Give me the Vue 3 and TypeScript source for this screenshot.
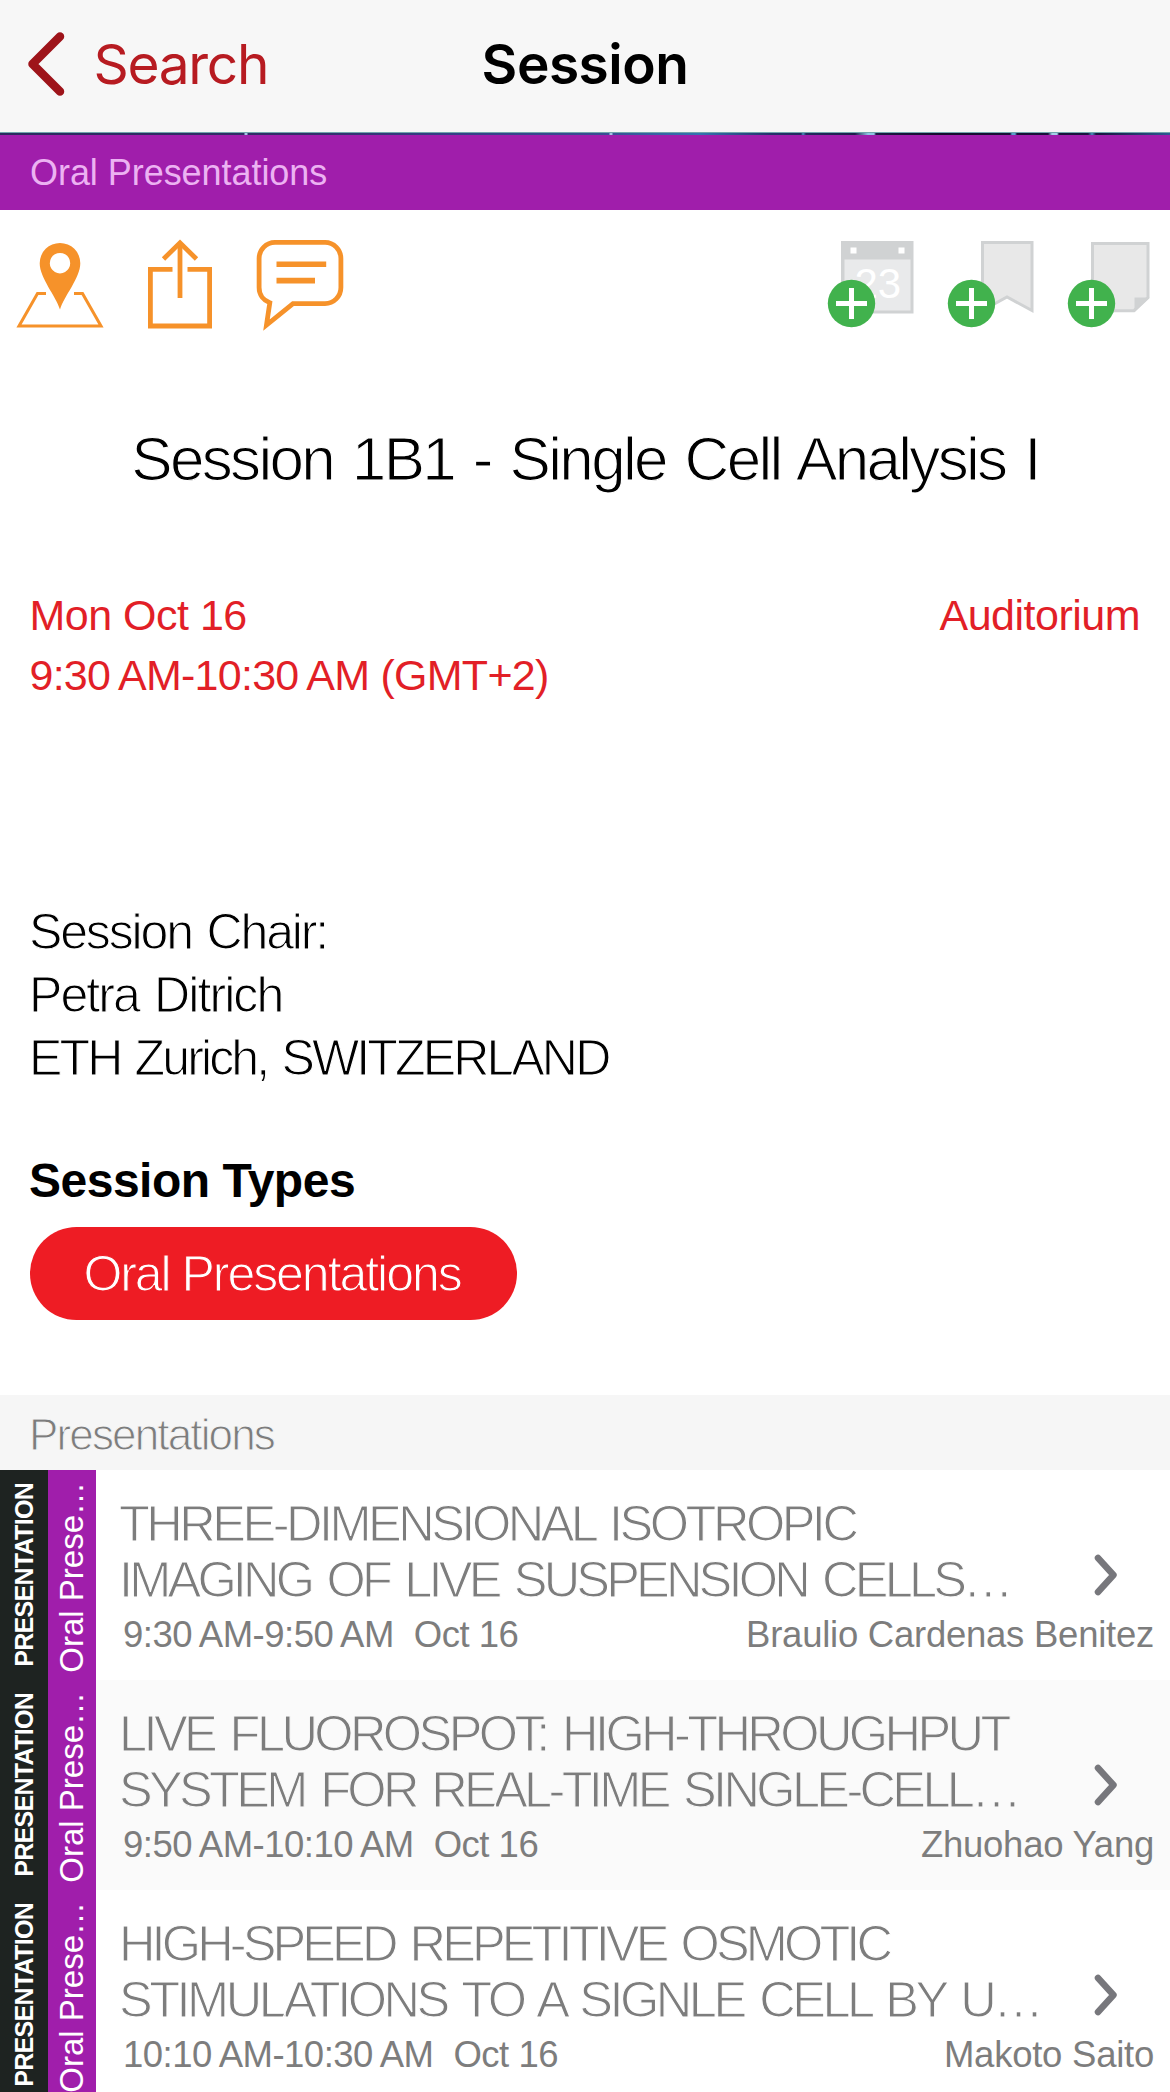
<script setup lang="ts">
interface Line {
  text: string
  /** Letter spacing in pixels. */
  tracking: number
}

interface Presentation {
  lines: Line[]
  time: string
  date: string
  speaker: string
}

const presentations: Presentation[] = [
  {
    lines: [
      { text: 'THREE-DIMENSIONAL ISOTROPIC', tracking: -3.5 },
      { text: 'IMAGING OF LIVE SUSPENSION CELLS…', tracking: -3.8 },
    ],
    time: '9:30\u2009AM-9:50\u2009AM',
    date: 'Oct 16',
    speaker: 'Braulio Cardenas Benitez',
  },
  {
    lines: [
      { text: 'LIVE FLUOROSPOT: HIGH-THROUGHPUT', tracking: -3.58 },
      { text: 'SYSTEM FOR REAL-TIME SINGLE-CELL…', tracking: -3.65 },
    ],
    time: '9:50\u2009AM-10:10\u2009AM',
    date: 'Oct 16',
    speaker: 'Zhuohao Yang',
  },
  {
    lines: [
      { text: 'HIGH-SPEED REPETITIVE OSMOTIC', tracking: -3.88 },
      { text: 'STIMULATIONS TO A SIGNLE CELL BY U…', tracking: -3.48 },
    ],
    time: '10:10\u2009AM-10:30\u2009AM',
    date: 'Oct 16',
    speaker: 'Makoto Saito',
  },
]

const chair: Line[] = [
  { text: 'Session Chair:', tracking: -2.15 },
  { text: 'Petra Ditrich', tracking: -1.9 },
  { text: 'ETH Zurich, SWITZERLAND', tracking: -2.85 },
]
</script>

<template>
  <div class="screen">
    <header class="nav">
      <button class="back">
        <svg class="back-icon" width="44" height="72" viewBox="0 0 44 72">
          <path d="M33 8.500 L5.500 36 L33 63.500" />
        </svg>
        <span class="back-label">Search</span>
      </button>
      <h1 class="nav-title">Session</h1>
    </header>
    <div class="photo-strip"></div>
    <div class="category">Oral Presentations</div>

    <div class="toolbar">
      <div class="tools">
        <svg width="120" height="140" viewBox="0 0 120 140">
          <path
            fill="#f6922a"
            fill-rule="evenodd"
            d="M60 99.500 C56 86 39.700 68 39.700 53.200 A20.300 20.300 0 0 1 80.300 53.200 C80.300 68 64 86 60 99.500 Z M60 43 a10.200 10.200 0 1 0 0.010 0 Z"
          />
          <path fill="none" stroke="#f6922a" stroke-width="3" d="M46 83.500 H37.500 L19 116 H101 L82.500 83.500 H74" />
        </svg>
        <svg width="120" height="140" viewBox="0 0 120 140">
          <g fill="none" stroke="#f6922a" stroke-width="4.800">
            <path d="M52.500 59.400 H30.400 V116 H89.600 V59.400 H67.500" />
            <path d="M60 88 V33" />
            <path d="M43.500 49 L60 32.800 L76.500 49" />
          </g>
        </svg>
        <svg width="120" height="140" viewBox="0 0 120 140">
          <g fill="none" stroke="#f6922a" stroke-width="4.800" stroke-miterlimit="10">
            <path d="M35 32.400 H85 A16 16 0 0 1 100.900 48.400 V77.600 A16 16 0 0 1 85 93.600 H53 L26.500 115 L29.800 92.800 C23.500 90.500 19.100 85 19.100 77.600 V48.400 A16 16 0 0 1 35 32.400 Z" />
            <path d="M36.500 54.200 H86.200" stroke-width="5.600" />
            <path d="M36.500 70.600 H75" stroke-width="5.600" />
          </g>
        </svg>
      </div>
      <div class="tools">
        <svg width="120" height="140" viewBox="0.500 0 120 140">
          <rect x="31.500" y="31" width="72.500" height="72.500" fill="#d0d2d3" />
          <rect x="35" y="49.500" width="66" height="51" fill="#e9eaeb" />
          <rect x="41" y="37.500" width="6" height="6" fill="#fff" />
          <rect x="89" y="37.500" width="6" height="6" fill="#fff" />
          <text class="day" x="45" y="88">23</text>
          <circle cx="42" cy="93.500" r="23.700" fill="#41b24d" />
          <path d="M26.500 93.500 H57.500 M42 78 V109" stroke="#fff" stroke-width="5" />
        </svg>
        <svg width="120" height="140" viewBox="0.500 0 120 140">
          <path d="M53 32.500 H102.500 V100.500 L77.500 87 L53 100.500 Z" fill="#e8e8e8" stroke="#d0d2d3" stroke-width="3" />
          <circle cx="42" cy="93.500" r="23.700" fill="#41b24d" />
          <path d="M26.500 93.500 H57.500 M42 78 V109" stroke="#fff" stroke-width="5" />
        </svg>
        <svg width="120" height="140" viewBox="0.500 0 120 140">
          <path d="M43 33.500 H98.500 V87.500 L84.500 100.700 H43 Z" fill="#e8e8e8" stroke="#d0d2d3" stroke-width="3" />
          <path d="M85 87.500 H100 L85 102 Z" fill="#d0d2d3" />
          <circle cx="42" cy="93.500" r="23.700" fill="#41b24d" />
          <path d="M26.500 93.500 H57.500 M42 78 V109" stroke="#fff" stroke-width="5" />
        </svg>
      </div>
    </div>

    <h2 class="session-title">Session 1B1 - Single Cell Analysis I</h2>

    <div class="when">
      <div>
        <div>Mon Oct 16</div>
        <div class="hours">9:30&#8201;AM-10:30&#8201;AM (GMT+2)</div>
      </div>
      <div>Auditorium</div>
    </div>

    <div class="chair">
      <div v-for="line in chair" :key="line.text" :style="{ letterSpacing: line.tracking + 'px' }">{{ line.text }}</div>
    </div>

    <h3 class="types-title">Session Types</h3>
    <div class="pill">Oral Presentations</div>

    <div class="list-header">Presentations</div>
    <ul class="list">
      <li v-for="item in presentations" :key="item.speaker" class="item">
        <div class="tag tag-kind"><span>PRESENTATION</span></div>
        <div class="tag tag-type"><span>Oral Prese…</span></div>
        <div class="body">
          <div class="headline">
            <div v-for="line in item.lines" :key="line.text" :style="{ letterSpacing: line.tracking + 'px' }">{{ line.text }}</div>
          </div>
          <div class="meta">
            <div class="slot">
              <span>{{ item.time }}</span>
              <span>{{ item.date }}</span>
            </div>
            <div>{{ item.speaker }}</div>
          </div>
          <svg class="chevron" width="30" height="46" viewBox="0 0 30 46">
            <path d="M6 6 L21.500 23 L6 40" />
          </svg>
        </div>
      </li>
    </ul>
  </div>
</template>

<style>
body {
  margin: 0;
  background: #fff;
}
</style>

<style scoped>
.screen {
  width: 1170px;
  height: 2092px;
  overflow: hidden;
  background: #fff;
  font-family: "Liberation Sans", Arial, sans-serif;
  color: #000;
  white-space: nowrap;
}

h1,
h2,
h3,
ul {
  margin: 0;
  padding: 0;
}

.nav {
  display: grid;
  grid-template-columns: 1fr auto 1fr;
  align-items: center;
  height: 132px;
  background: #f7f7f7;
  font-family: Inter, "Liberation Sans", sans-serif;
}

.back {
  display: flex;
  align-items: center;
  padding: 0 0 4px 27px;
  border: 0;
  background: none;
  color: #b71b21;
  font: inherit;
}

.back-icon path {
  fill: none;
  stroke: #9e141a;
  stroke-width: 8.5;
  stroke-linecap: round;
  stroke-linejoin: round;
}

.back-label {
  margin-left: 22.5px;
  font-size: 55px;
  line-height: 72px;
  letter-spacing: -1.3px;
}

.nav-title {
  padding-bottom: 4px;
  font-size: 55px;
  font-weight: 600;
  line-height: 72px;
  letter-spacing: -0.5px;
}

.photo-strip {
  height: 3px;
  background:
    linear-gradient(#6fa5ab, #6fa5ab) 0 0 / 100% 1px no-repeat,
    linear-gradient(90deg, transparent 244px, #a8c4e6 245px 247px, transparent 248px 609px, #a8c4e6 610px 612px, transparent 613px 801px, #4a90c0 803px, transparent 806px 855px, #8fc4e4 868px 874px, transparent 876px 1010px, #5aa0cc 1012px 1015px, transparent 1017px 1048px, #a5d0e8 1052px 1057px, transparent 1059px 1088px, #4c8fc0 1092px, transparent 1096px),
    linear-gradient(90deg, #2b2a5e 0, #332d68 300px, #363f86 450px, #3a4c92 600px, #3573b0 700px, #27316b 770px, #1e1c48 860px, #170b2d 940px, #1b1440 1100px, #2d5a92 1170px);
}

.category {
  height: 75px;
  padding-left: 30px;
  background: #a01eab;
  color: #ecb2f2;
  font-size: 36px;
  line-height: 76px;
  letter-spacing: -0.05px;
}

.toolbar {
  display: flex;
  justify-content: space-between;
  height: 140px;
}

.tools {
  display: flex;
}

.day {
  fill: #fff;
  font-size: 42px;
}

.session-title {
  margin-top: 69px;
  text-align: center;
  font-size: 62px;
  font-weight: 400;
  line-height: 80px;
  letter-spacing: -2.68px;
  word-spacing: 4.2px;
  -webkit-text-stroke: 1.2px #fff;
}

.when {
  display: flex;
  justify-content: space-between;
  margin-top: 86px;
  padding: 0 30px 0 29.5px;
  color: #e21f27;
  font-size: 43px;
  line-height: 60px;
  letter-spacing: -0.5px;
}

.hours {
  letter-spacing: -0.75px;
}

.chair {
  margin-top: 196px;
  padding-left: 29px;
  font-size: 50px;
  line-height: 63px;
  word-spacing: 3px;
  -webkit-text-stroke: 1.1px #fff;
}

.types-title {
  margin-top: 61px;
  padding-left: 29px;
  font-size: 48px;
  line-height: 60px;
  letter-spacing: -0.5px;
}

.pill {
  display: flex;
  align-items: center;
  justify-content: center;
  box-sizing: border-box;
  width: 487px;
  height: 93px;
  margin: 16px 0 0 30px;
  padding-right: 3px;
  border-radius: 47px;
  background: #ee1c24;
  color: #fff;
  font-size: 50px;
  letter-spacing: -2.05px;
  -webkit-text-stroke: 1.1px #ee1c24;
}

.list-header {
  height: 72px;
  margin-top: 75px;
  padding: 3px 0 0 29px;
  background: #f6f6f6;
  color: #7d7d7d;
  font-size: 44px;
  line-height: 73px;
  letter-spacing: -1.85px;
  -webkit-text-stroke: 1px #f6f6f6;
}

.list {
  list-style: none;
}

.item {
  --row-bg: #fff;
  display: flex;
  height: 210px;
  background: var(--row-bg);
}

.item:nth-child(even) {
  --row-bg: #fafafa;
}

.tag {
  display: flex;
  align-items: center;
  justify-content: center;
  width: 48px;
  height: 210px;
  color: #fff;
}

.tag span {
  writing-mode: vertical-rl;
  transform: rotate(180deg);
}

.tag-kind {
  background: #1e2321;
  font-size: 25px;
  font-weight: 700;
  letter-spacing: -0.7px;
}

.tag-type {
  padding-top: 4px;
  box-sizing: border-box;
  background: #a01eab;
  font-size: 33px;
}

.body {
  position: relative;
  flex: 1;
  padding: 26px 16px 0 23px;
  color: #7d7d7d;
}

.headline {
  font-size: 50.5px;
  line-height: 56px;
  word-spacing: 5px;
  -webkit-text-stroke: 1.1px var(--row-bg);
}

.meta {
  display: flex;
  justify-content: space-between;
  margin-top: 5px;
  padding-left: 4px;
  font-size: 36.5px;
  line-height: 44px;
  letter-spacing: -0.25px;
}

.slot {
  display: flex;
  gap: 20px;
  letter-spacing: -0.5px;
}

.chevron {
  position: absolute;
  top: 82px;
  right: 48px;
}

.chevron path {
  fill: none;
  stroke: #77777c;
  stroke-width: 6.5;
  stroke-linecap: round;
  stroke-linejoin: round;
}
</style>
